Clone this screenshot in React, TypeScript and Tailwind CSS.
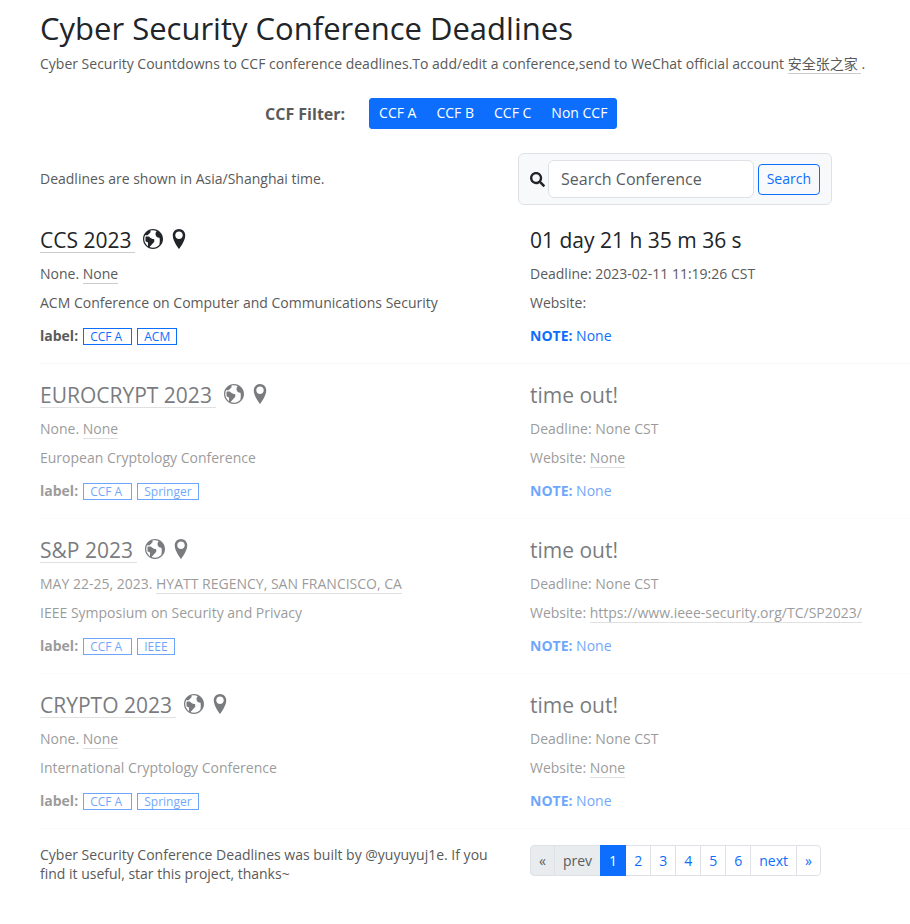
import type { ReactNode } from 'react';
import { ImEarth, ImLocation } from 'react-icons/im';
import { FaSearch } from 'react-icons/fa';

type Conference = {
  name: string;
  fullName: string;
  date: string;
  place: string;
  countdown: string;
  deadline: string;
  website: string;
  publisher: string;
  note: string;
  expired: boolean;
};

const conferences: Conference[] = [
  {
    name: 'CCS 2023',
    fullName: 'ACM Conference on Computer and Communications Security',
    date: 'None.',
    place: 'None',
    countdown: '01 day 21 h 35 m 36 s',
    deadline: '2023-02-11 11:19:26 CST',
    website: '',
    publisher: 'ACM',
    note: 'None',
    expired: false,
  },
  {
    name: 'EUROCRYPT 2023',
    fullName: 'European Cryptology Conference',
    date: 'None.',
    place: 'None',
    countdown: 'time out!',
    deadline: 'None CST',
    website: 'None',
    publisher: 'Springer',
    note: 'None',
    expired: true,
  },
  {
    name: 'S&P 2023',
    fullName: 'IEEE Symposium on Security and Privacy',
    date: 'MAY 22-25, 2023.',
    place: 'HYATT REGENCY, SAN FRANCISCO, CA',
    countdown: 'time out!',
    deadline: 'None CST',
    website: 'https://www.ieee-security.org/TC/SP2023/',
    publisher: 'IEEE',
    note: 'None',
    expired: true,
  },
  {
    name: 'CRYPTO 2023',
    fullName: 'International Cryptology Conference',
    date: 'None.',
    place: 'None',
    countdown: 'time out!',
    deadline: 'None CST',
    website: 'None',
    publisher: 'Springer',
    note: 'None',
    expired: true,
  },
];

const filters = ['CCF A', 'CCF B', 'CCF C', 'Non CCF'];
const pages = ['«', 'prev', '1', '2', '3', '4', '5', '6', 'next', '»'];

function TextLink({ children }: { children: ReactNode }) {
  return (
    <a href="#" className="border-b border-[#cccccc]">
      {children}
    </a>
  );
}

function Badge({ children }: { children: ReactNode }) {
  return (
    <span className="border border-[#0d6efd] px-[6px] text-xs leading-[15px] text-[#0d6efd]">
      {children}
    </span>
  );
}

function ConferenceRow({ conf }: { conf: Conference }) {
  return (
    <article
      className={`grid grid-cols-[49fr_38fr] border-b border-[#f8f8f8] pt-5 pb-[17px] ${
        conf.expired ? 'opacity-60' : ''
      }`}
    >
      <div>
        <div className="flex h-6 items-start text-[#212529]">
          <h2 className="text-[21px] leading-[23px]">
            <a href="#" className="block border-b border-[#cccccc] pr-1">
              {conf.name}
            </a>
          </h2>
          <a href="#" aria-label="Website" className="ml-2">
            <ImEarth size={20} />
          </a>
          <a href="#" aria-label="Location" className="ml-[6px]">
            <ImLocation size={20} />
          </a>
        </div>
        <p className="mt-[11px]">
          {conf.date} <TextLink>{conf.place}</TextLink>
        </p>
        <p className="mt-[9px]">{conf.fullName}</p>
        <div className="mt-[13px] flex items-center gap-[5px]">
          <b>label:</b>
          <Badge>CCF A&nbsp;</Badge>
          <Badge>{conf.publisher}</Badge>
        </div>
      </div>
      <div>
        <div className="h-6 text-[21px] leading-[23px] text-[#212529]">{conf.countdown}</div>
        <p className="mt-[11px]">Deadline: {conf.deadline}</p>
        <p className="mt-[9px]">
          Website: {conf.website && <TextLink>{conf.website}</TextLink>}
        </p>
        <p className="mt-[13px] text-[#0d6efd]">
          <b>NOTE:</b> {conf.note}
        </p>
      </div>
    </article>
  );
}

function Pagination() {
  return (
    <nav aria-label="Pages">
      <ul className="flex">
        {pages.map((page, i) => {
          const active = page === '1';
          const disabled = i < 2;
          return (
            <li
              key={page}
              className={`-ml-px first:ml-0 ${active ? 'z-10' : ''}`}
            >
              <a
                href="#"
                aria-current={active ? 'page' : undefined}
                className={`flex h-[31px] items-center justify-center border px-2 ${
                  i === 0 ? 'rounded-l' : ''
                } ${i === pages.length - 1 ? 'rounded-r' : ''} ${
                  active
                    ? 'border-[#0d6efd] bg-[#0d6efd] text-white'
                    : disabled
                      ? 'border-[#dee2e6] bg-[#e9ecef] text-[#595c5f]'
                      : 'border-[#dee2e6] bg-white text-[#0d6efd]'
                }`}
              >
                {page}
              </a>
            </li>
          );
        })}
      </ul>
    </nav>
  );
}

export default function App() {
  return (
    <main className="bg-white pt-[10px] pb-12 pl-10 font-['Open_Sans','Noto_Sans_CJK_SC',sans-serif] text-sm leading-5 text-[#5a5a5a]">
      <header>
        <h1 className="text-[31px] leading-9 text-[#212529]">
          Cyber Security Conference Deadlines
        </h1>
        <p className="mt-2">
          Cyber Security Countdowns to CCF conference deadlines.To add/edit a conference,send to
          WeChat official account <TextLink>安全张之家&nbsp;</TextLink>.
        </p>
      </header>

      <div className="mt-6 ml-[225px] flex items-center gap-6">
        <b className="text-base">CCF Filter:</b>
        <div className="flex overflow-hidden rounded bg-[#0d6efd]">
          {filters.map((f) => (
            <button
              key={f}
              type="button"
              className="h-[31px] border border-[#0d6efd] px-[9px] pb-[2px] text-sm text-white"
            >
              {f}
            </button>
          ))}
        </div>
      </div>

      <div className="mt-6 grid grid-cols-[49fr_38fr] items-center">
        <p>Deadlines are shown in Asia/Shanghai time.</p>
        <form
          className="-ml-3 flex h-[52px] w-[314px] items-center rounded-md border border-[#dee2e6] bg-[#f8f9fa] px-[11px]"
          onSubmit={(e) => e.preventDefault()}
        >
          <label htmlFor="search" aria-label="Search Conference">
            <FaSearch size={15} className="text-[#212529]" />
          </label>
          <input
            id="search"
            type="text"
            placeholder="Search Conference"
            className="mr-1 ml-[3px] h-[38px] min-w-0 flex-1 rounded-md border border-[#dee2e6] bg-white px-3 text-base placeholder:text-[#595c5f]"
          />
          <button
            type="submit"
            className="h-[31px] rounded border border-[#0d6efd] px-2 text-sm text-[#0d6efd]"
          >
            Search
          </button>
        </form>
      </div>

      <section className="mt-1">
        {conferences.map((conf) => (
          <ConferenceRow key={conf.name} conf={conf} />
        ))}
      </section>

      <footer className="mt-4 grid grid-cols-[49fr_38fr] items-start">
        <p className="pr-6 leading-[19px]">
          Cyber Security Conference Deadlines was built by @yuyuyuj1e. If you find it useful, star
          this project, thanks~
        </p>
        <Pagination />
      </footer>
    </main>
  );
}
